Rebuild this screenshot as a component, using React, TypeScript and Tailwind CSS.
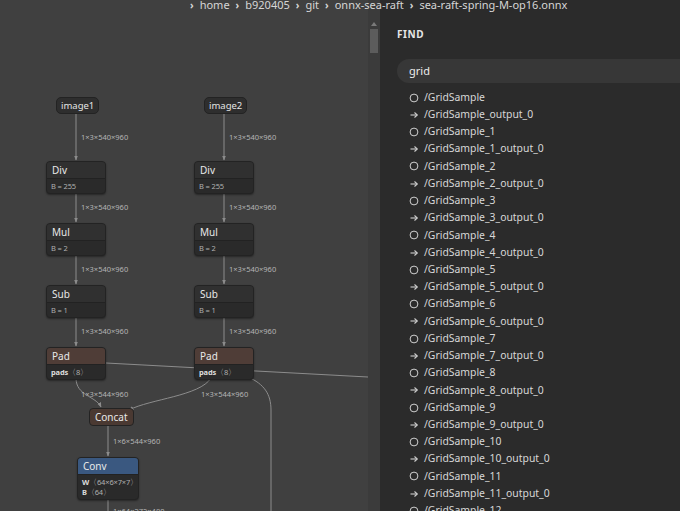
import React from "react";

type Attr = { name: string; value: string; bold?: boolean };

type GraphNode = {
  id: string;
  x: number;
  y: number;
  w: number;
  title: string;
  header: string;
  attrs?: Attr[];
};

const NODES: GraphNode[] = [
  { id: "div1", x: 46, y: 161, w: 60, title: "Div", header: "bg-[#303030]", attrs: [{ name: "B", value: "= 255" }] },
  { id: "div2", x: 194, y: 161, w: 60, title: "Div", header: "bg-[#303030]", attrs: [{ name: "B", value: "= 255" }] },
  { id: "mul1", x: 46, y: 223, w: 60, title: "Mul", header: "bg-[#303030]", attrs: [{ name: "B", value: "= 2" }] },
  { id: "mul2", x: 194, y: 223, w: 60, title: "Mul", header: "bg-[#303030]", attrs: [{ name: "B", value: "= 2" }] },
  { id: "sub1", x: 46, y: 285, w: 60, title: "Sub", header: "bg-[#303030]", attrs: [{ name: "B", value: "= 1" }] },
  { id: "sub2", x: 194, y: 285, w: 60, title: "Sub", header: "bg-[#303030]", attrs: [{ name: "B", value: "= 1" }] },
  { id: "pad1", x: 46, y: 347, w: 60, title: "Pad", header: "bg-[#4f3d37]", attrs: [{ name: "pads", value: "〈8〉", bold: true }] },
  { id: "pad2", x: 194, y: 347, w: 60, title: "Pad", header: "bg-[#4f3d37]", attrs: [{ name: "pads", value: "〈8〉", bold: true }] },
  {
    id: "conv",
    x: 77,
    y: 457,
    w: 62,
    title: "Conv",
    header: "bg-[#3a5880]",
    attrs: [
      { name: "W", value: "〈64×6×7×7〉", bold: true },
      { name: "B", value: "〈64〉", bold: true },
    ],
  },
];

const LABELS: { x: number; y: number; text: string }[] = [
  { x: 81, y: 137, text: "1×3×540×960" },
  { x: 229, y: 137, text: "1×3×540×960" },
  { x: 81, y: 207, text: "1×3×540×960" },
  { x: 229, y: 207, text: "1×3×540×960" },
  { x: 81, y: 269, text: "1×3×540×960" },
  { x: 229, y: 269, text: "1×3×540×960" },
  { x: 81, y: 331, text: "1×3×540×960" },
  { x: 229, y: 331, text: "1×3×540×960" },
  { x: 81, y: 394, text: "1×3×544×960" },
  { x: 201, y: 394, text: "1×3×544×960" },
  { x: 113, y: 441, text: "1×6×544×960" },
  { x: 113, y: 511, text: "1×64×272×480" },
];

const RESULTS: { kind: "node" | "value"; name: string }[] = [];
for (let i = 0; i <= 12; i++) {
  const base = i === 0 ? "/GridSample" : `/GridSample_${i}`;
  RESULTS.push({ kind: "node", name: base });
  RESULTS.push({ kind: "value", name: `${base}_output_0` });
}

const CRUMBS = ["home", "b920405", "git", "onnx-sea-raft", "sea-raft-spring-M-op16.onnx"];

function NodeBox({ node }: { node: GraphNode }) {
  return (
    <div
      className="absolute rounded-[4px] border border-[#232323] bg-[#2a2a2a] shadow-[0_1px_2px_rgba(0,0,0,0.4)]"
      style={{ left: node.x, top: node.y, width: node.w }}
    >
      <div className={`${node.header} h-[16px] rounded-t-[3px] px-[5px] text-[10px] leading-[16px] text-[#e8e8e8]`}>
        {node.title}
      </div>
      <div className="rounded-b-[3px] border-t border-[#222] px-[4px] py-[2px]">
        {node.attrs?.map((a) => (
          <div key={a.name} className="h-[10px] whitespace-nowrap text-[7.5px] leading-[10px] tracking-[-0.02em] text-[#b0b0b0]">
            <span className={a.bold ? "font-bold text-[#dcdcdc]" : ""}>{a.name}</span>
            {a.bold ? "" : " "}
            {a.value}
          </div>
        ))}
      </div>
    </div>
  );
}

function InputBox({ x, label }: { x: number; label: string }) {
  return (
    <div
      className="absolute h-[17px] rounded-[5px] border border-[#232323] bg-[#2e2e2e] px-[4px] text-[9.5px] leading-[15px] text-[#e4e4e4]"
      style={{ left: x, top: 97 }}
    >
      {label}
    </div>
  );
}

function Edges() {
  const stroke = "#8c8c8c";
  const down = (x: number, y1: number, y2: number) => `M${x} ${y1} L${x} ${y2}`;
  return (
    <svg className="absolute left-0 top-0" width="368" height="511" viewBox="0 0 368 511">
      <defs>
        <marker id="arr" viewBox="0 0 10 10" refX="9" refY="5" markerWidth="5" markerHeight="5" orient="auto">
          <path d="M0 1 L10 5 L0 9 Z" fill={stroke} />
        </marker>
      </defs>
      <g fill="none" stroke={stroke} strokeWidth="1">
        <path d="M106 363 L368 377" />
        <path d="M248 377 C264 384 271 394 271 410 L271 511" />
        {[76, 224].map((x) => (
          <g key={x}>
            <path d={down(x, 114, 160)} markerEnd="url(#arr)" />
            <path d={down(x, 192, 222)} markerEnd="url(#arr)" />
            <path d={down(x, 254, 284)} markerEnd="url(#arr)" />
            <path d={down(x, 316, 346)} markerEnd="url(#arr)" />
          </g>
        ))}
        <path d="M76 378 C76 396 96 396 101 407" markerEnd="url(#arr)" />
        <path d="M211 378 C200 396 150 399 129 410" markerEnd="url(#arr)" />
        <path d={down(108, 426, 456)} markerEnd="url(#arr)" />
        <path d={down(108, 497, 511)} />
      </g>
    </svg>
  );
}

function ResultIcon({ kind }: { kind: "node" | "value" }) {
  return kind === "node" ? (
    <svg width="10" height="10" viewBox="0 0 10 10" className="shrink-0">
      <circle cx="5" cy="5" r="3.9" fill="none" stroke="#cfcfcf" strokeWidth="1" />
    </svg>
  ) : (
    <svg width="10" height="10" viewBox="0 0 10 10" className="shrink-0">
      <path d="M1.5 5 H8" stroke="#cfcfcf" strokeWidth="1.1" fill="none" />
      <path d="M5.5 2.5 L8.3 5 L5.5 7.5" stroke="#cfcfcf" strokeWidth="1.1" fill="none" />
    </svg>
  );
}

export default function App() {
  return (
    <div className="relative flex h-[511px] w-[680px] overflow-hidden bg-[#2b2b2b] font-['Noto_Sans',sans-serif]">
      {/* graph canvas */}
      <div className="relative h-full w-[368px] shrink-0 bg-[#404040]">
        <Edges />
        <InputBox x={56} label="image1" />
        <InputBox x={204} label="image2" />
        {NODES.map((n) => (
          <NodeBox key={n.id} node={n} />
        ))}
        <div
          className="absolute h-[18px] rounded-[4px] border border-[#232323] bg-[#4a3932] px-[5px] text-[10px] leading-[16px] text-[#e8e8e8]"
          style={{ left: 89, top: 408 }}
        >
          Concat
        </div>
        {LABELS.map((l, i) => (
          <div
            key={i}
            className="absolute -translate-y-1/2 whitespace-nowrap text-[7.5px] leading-[10px] text-[#b4b4b4]"
            style={{ left: l.x, top: l.y }}
          >
            {l.text}
          </div>
        ))}
      </div>

      {/* scrollbar */}
      <div className="flex h-full w-[12px] shrink-0 flex-col items-center bg-[#3b3b3b] pt-[22px]">
        <div className="h-0 w-0 border-x-[3px] border-b-[4px] border-x-transparent border-b-[#7a7a7a]" />
        <div className="mt-[3px] h-[24px] w-[8px] bg-[#5c5c5c]" />
      </div>

      {/* find panel */}
      <div className="flex min-w-0 flex-1 flex-col pl-[17px] pt-[27px]">
        <div className="shrink-0 text-[10px] font-bold tracking-[0.06em] text-[#e6e6e6]">FIND</div>
        <div className="mt-[17px] -mr-[20px] flex h-[24px] shrink-0 items-center rounded-full bg-[#373737] pl-[12px] text-[11px] text-[#ececec]">
          grid
        </div>
        <ul className="mt-[6px] shrink-0 pl-[12px]">
          {RESULTS.map((r) => (
            <li key={r.name} className="flex h-[17.22px] items-center gap-[5px] whitespace-nowrap text-[10.4px] text-[#d8d8d8]">
              <ResultIcon kind={r.kind} />
              <span>{r.name}</span>
            </li>
          ))}
        </ul>
      </div>

      {/* breadcrumb overlay */}
      <div className="absolute left-[190px] top-[-3px] flex items-center gap-[6px] whitespace-nowrap text-[11px] text-[#d6d6d6]">
        {CRUMBS.map((c) => (
          <React.Fragment key={c}>
            <span className="text-[10px] font-bold">›</span>
            <span>{c}</span>
          </React.Fragment>
        ))}
      </div>
    </div>
  );
}
